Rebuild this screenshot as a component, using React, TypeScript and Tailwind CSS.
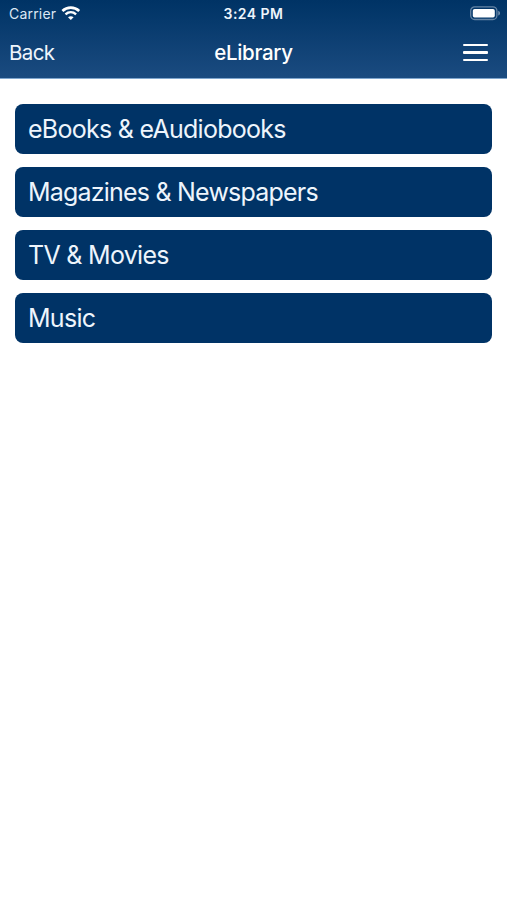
const items = [
  { label: "eBooks & eAudiobooks", tracking: "tracking-[-0.73px]" },
  { label: "Magazines & Newspapers", tracking: "tracking-[-0.79px]" },
  { label: "TV & Movies", tracking: "tracking-[-0.7px]" },
  { label: "Music", tracking: "tracking-[-0.7px]" },
];

function WifiIcon() {
  return (
    <svg width="20" height="15" viewBox="0 0 20 15" fill="none" stroke="#fff">
      <path d="M1.4 5C6.2 0.6 13.4 0.6 18.2 5" strokeWidth="2.7" />
      <path d="M4.5 8.4C7.6 5.6 12 5.6 15.1 8.4" strokeWidth="2.4" />
      <path d="M9.8 14L7 11.3C8.6 9.8 11 9.8 12.6 11.3Z" fill="#fff" stroke="none" />
    </svg>
  );
}

function BatteryIcon() {
  return (
    <svg width="32" height="15" viewBox="0 0 32 15" fill="none">
      <rect x="0.7" y="0.9" width="26.2" height="12.6" rx="4" stroke="#6685a5" strokeWidth="1.3" />
      <rect x="2.8" y="3" width="22" height="8.6" rx="1.8" fill="#fff" />
      <path d="M28.3 4.8V9.6C30.5 8.8 30.5 5.6 28.3 4.8Z" fill="#7f99b4" />
    </svg>
  );
}

export default function App() {
  return (
    <div className="h-[900px] w-[507px] overflow-hidden bg-white font-['Inter','Liberation_Sans',sans-serif] text-white">
      <header className="h-[79.4px] border-b border-[#7fa6ce] bg-linear-to-b from-[#003365] to-[#1a4b80]">
        <div className="grid h-[27px] grid-cols-[1fr_auto_1fr] items-center pr-[5px] pl-[9px]">
          <div className="flex items-center gap-[5px] text-[14px] text-[#dce8f5]">
            <span className="tracking-[0.2px]">Carrier</span>
            <WifiIcon />
          </div>
          <div className="pr-[4px] pb-px text-center text-[14px] font-semibold tracking-[0.45px] text-[#eef5fc]">3:24 PM</div>
          <div className="flex justify-end">
            <BatteryIcon />
          </div>
        </div>
        <nav className="grid h-[51px] grid-cols-[1fr_auto_1fr] items-center px-[9px]">
          <button className="pt-[2px] text-left text-[20.5px] tracking-[-0.6px] text-[#eef5fc]">Back</button>
          <h1 className="pt-[2px] text-center text-[20.5px] font-medium tracking-[-0.3px]">eLibrary</h1>
          <button aria-label="Menu" className="flex flex-col items-end gap-[5px] pr-[10px]">
            <span className="h-[2.6px] w-[25.5px] rounded-[1px] bg-white" />
            <span className="h-[2.6px] w-[25.5px] rounded-[1px] bg-white" />
            <span className="h-[2.6px] w-[25.5px] rounded-[1px] bg-white" />
          </button>
        </nav>
      </header>
      <main className="flex flex-col gap-[12.8px] px-[15.4px] pt-[25.1px]">
        {items.map((item) => (
          <button
            key={item.label}
            className="flex h-[50px] items-center rounded-[8px] bg-[#003366] pt-px pl-[12.6px] text-left text-[25px] text-[#eef5fc]"
          >
            <span className={item.tracking}>{item.label}</span>
          </button>
        ))}
      </main>
    </div>
  );
}
